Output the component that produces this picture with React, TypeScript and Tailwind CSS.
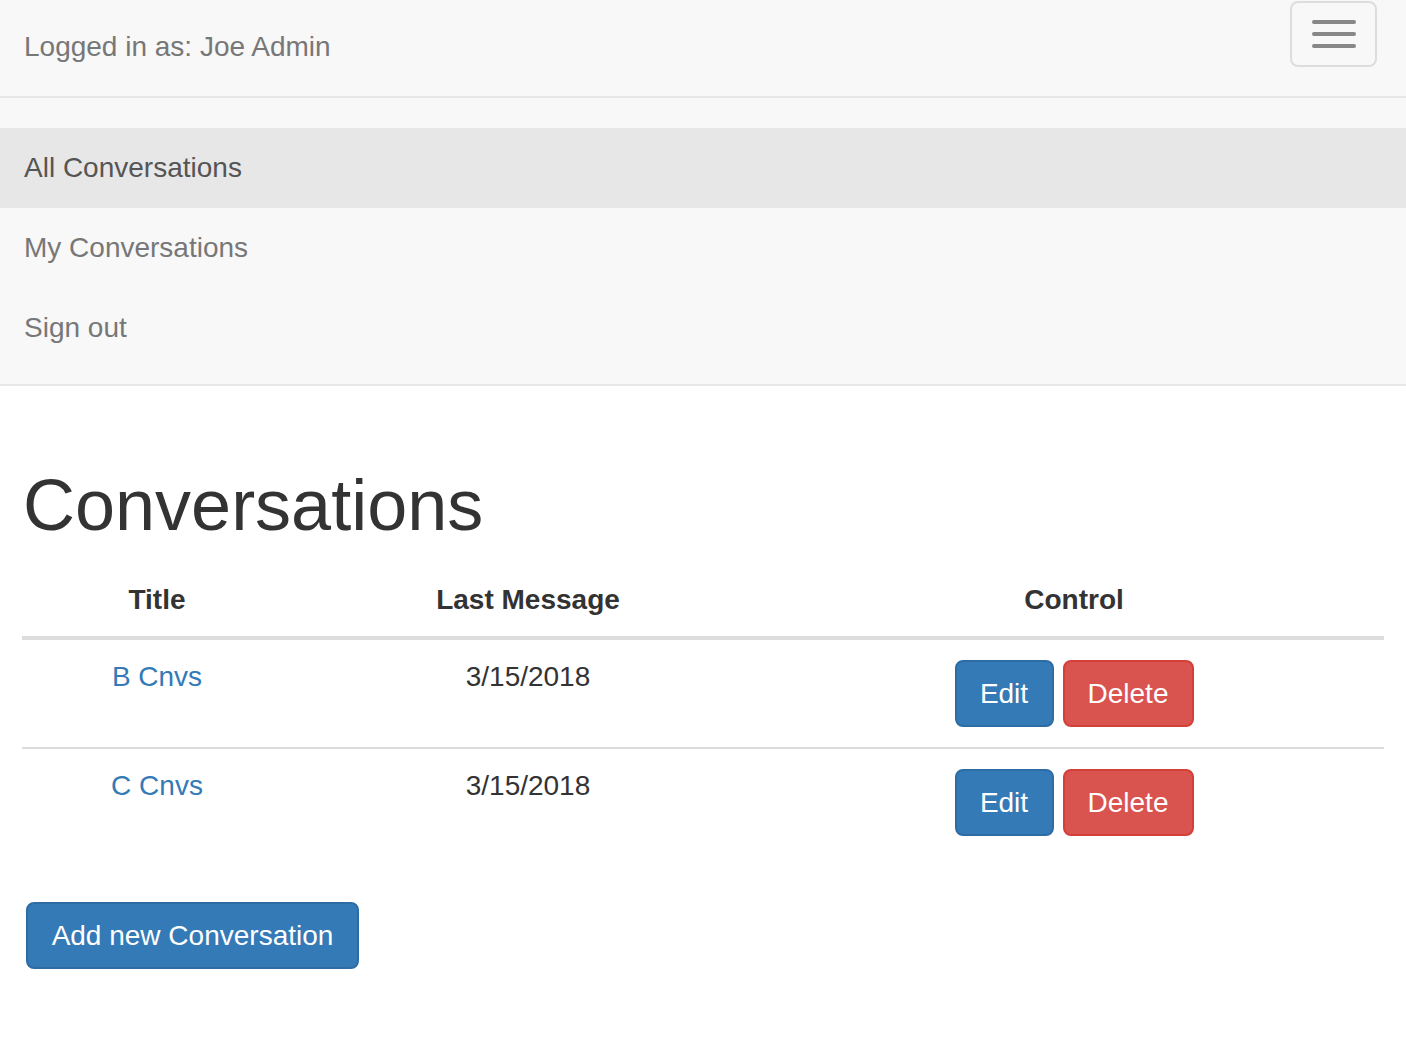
import React from "react";

type Conversation = { id: number; title: string; lastMessage: string };

const conversations: Conversation[] = [
  { id: 1, title: "B Cnvs", lastMessage: "3/15/2018" },
  { id: 2, title: "C Cnvs", lastMessage: "3/15/2018" },
];

const navLinks = [
  { label: "All Conversations", active: true },
  { label: "My Conversations", active: false },
  { label: "Sign out", active: false },
];

function Navbar() {
  return (
    <nav className="bg-[#f8f8f8] border-b-2 border-[#e7e7e7]">
      <div className="flex items-start justify-between h-[98px] border-b-2 border-[#e7e7e7]">
        <p className="pl-[24px] pt-[27px] text-[28px] leading-[40px] text-[#777]">
          Logged in as: Joe Admin
        </p>
        <button className="mt-[1px] mr-[29px] w-[87px] h-[66px] rounded-[8px] border-2 border-[#ddd] flex flex-col items-center justify-center gap-[8px]">
          <span className="block w-[44px] h-[4px] rounded-[2px] bg-[#888]" />
          <span className="block w-[44px] h-[4px] rounded-[2px] bg-[#888]" />
          <span className="block w-[44px] h-[4px] rounded-[2px] bg-[#888]" />
        </button>
      </div>
      <ul className="pt-[30px] pb-[16px]">
        {navLinks.map((link) => (
          <li key={link.label}>
            <a
              href="#"
              className={`block px-[24px] py-[20px] text-[28px] leading-[40px] ${
                link.active ? "bg-[#e7e7e7] text-[#555]" : "text-[#777]"
              }`}
            >
              {link.label}
            </a>
          </li>
        ))}
      </ul>
    </nav>
  );
}

export default function App() {
  return (
    <div className="min-h-screen bg-white font-['Liberation_Sans',Arial,sans-serif] text-[#333]">
      <Navbar />
      <main className="px-[22px] pt-[80px]">
        <h1 className="text-[72px] leading-[79px] font-normal pl-[1px]">Conversations</h1>
        <table className="mt-[19px] w-full table-fixed border-collapse text-[28px] leading-[40px]">
          <thead>
            <tr className="border-b-4 border-[#ddd]">
              <th className="w-[270px] py-[16px] text-center font-bold">Title</th>
              <th className="w-[472px] py-[16px] text-center font-bold">Last Message</th>
              <th className="py-[16px] text-center font-bold">Control</th>
            </tr>
          </thead>
          <tbody>
            {conversations.map((c, i) => (
              <tr
                key={c.id}
                className={i < conversations.length - 1 ? "border-b-2 border-[#ddd]" : ""}
              >
                <td className="pt-[17px] pb-[20px] align-top text-center">
                  <a href="#" className="text-[#337ab7]">
                    {c.title}
                  </a>
                </td>
                <td className="pt-[17px] pb-[20px] align-top text-center">{c.lastMessage}</td>
                <td className="py-[20px] align-top text-center">
                  <div className="flex justify-center gap-[9px]">
                    <button className="h-[67px] w-[99px] rounded-[8px] border-2 border-[#2e6da4] bg-[#337ab7] text-white">
                      Edit
                    </button>
                    <button className="h-[67px] w-[131px] rounded-[8px] border-2 border-[#d43f3a] bg-[#d9534f] text-white">
                      Delete
                    </button>
                  </div>
                </td>
              </tr>
            ))}
          </tbody>
        </table>
        <button className="mt-[46px] ml-[4px] h-[67px] w-[333px] rounded-[8px] border-2 border-[#2e6da4] bg-[#337ab7] text-white text-[28px] leading-[40px]">
          Add new Conversation
        </button>
      </main>
    </div>
  );
}
